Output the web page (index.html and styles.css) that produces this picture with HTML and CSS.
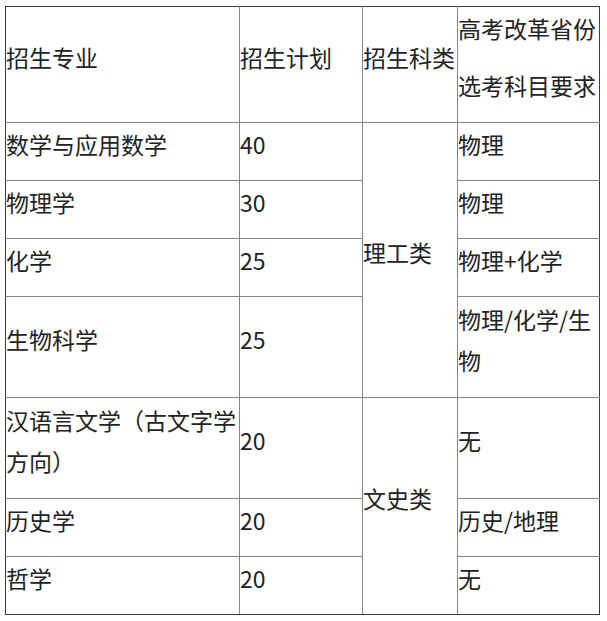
FILE: index.html
```html
<!DOCTYPE html>
<html lang="zh-CN">
<head>
<meta charset="utf-8">
<title>招生计划</title>
<link rel="stylesheet" href="styles.css">
</head>
<body>
<table class="plan">
  <colgroup>
    <col class="c1"><col class="c2"><col class="c3"><col class="c4">
  </colgroup>
  <tr class="row-head">
    <td class="edge-top edge-left">招生专业</td>
    <td class="edge-top">招生计划</td>
    <td class="edge-top">招生科类</td>
    <td class="edge-top edge-right"><div class="stack"><span>高考改革省份</span><span>选考科目要求</span></div></td>
  </tr>
  <tr class="row-1">
    <td class="edge-left">数学与应用数学</td>
    <td>40</td>
    <td rowspan="4">理工类</td>
    <td class="edge-right">物理</td>
  </tr>
  <tr class="row-1">
    <td class="edge-left">物理学</td>
    <td>30</td>
    <td class="edge-right">物理</td>
  </tr>
  <tr class="row-1">
    <td class="edge-left">化学</td>
    <td>25</td>
    <td class="edge-right">物理+化学</td>
  </tr>
  <tr class="row-2">
    <td class="edge-left">生物科学</td>
    <td>25</td>
    <td class="edge-right">物理/化学/生物</td>
  </tr>
  <tr class="row-2">
    <td class="edge-left">汉语言文学（古文字学方向）</td>
    <td>20</td>
    <td rowspan="3" class="edge-bottom">文史类</td>
    <td class="edge-right">无</td>
  </tr>
  <tr class="row-1">
    <td class="edge-left">历史学</td>
    <td>20</td>
    <td class="edge-right">历史/地理</td>
  </tr>
  <tr class="row-1">
    <td class="edge-left edge-bottom">哲学</td>
    <td class="edge-bottom">20</td>
    <td class="edge-right edge-bottom">无</td>
  </tr>
</table>
</body>
</html>
```
FILE: styles.css
```css
html, body {
  background: #ffffff;
}
body {
  margin: 6px 0 0 5px;
  font-family: "Noto Sans CJK SC", "Noto Sans", sans-serif;
  font-size: 23px;
  color: #222222;
}
.plan {
  border-collapse: collapse;
  table-layout: fixed;
  width: 595px;
}
.c1 { width: 234px; }
.c2 { width: 123px; }
.c3 { width: 95px; }
.c4 { width: 142px; }
.plan td {
  border: 1px solid #858585;
  padding: 0 0 14px 0;
  vertical-align: middle;
  line-height: 41.5px;
  word-break: break-all;
}
.plan td.edge-top { border-top-color: #3c3c3c; }
.plan td.edge-left { border-left-color: #3c3c3c; }
.plan td.edge-right { border-right-color: #3c3c3c; }
.plan td.edge-bottom { border-bottom-color: #3c3c3c; }
.row-head { height: 116px; }
.row-1 { height: 58px; }
.row-2 { height: 101px; }
.stack {
  display: flex;
  flex-direction: column;
  gap: 15.5px;
}
```
